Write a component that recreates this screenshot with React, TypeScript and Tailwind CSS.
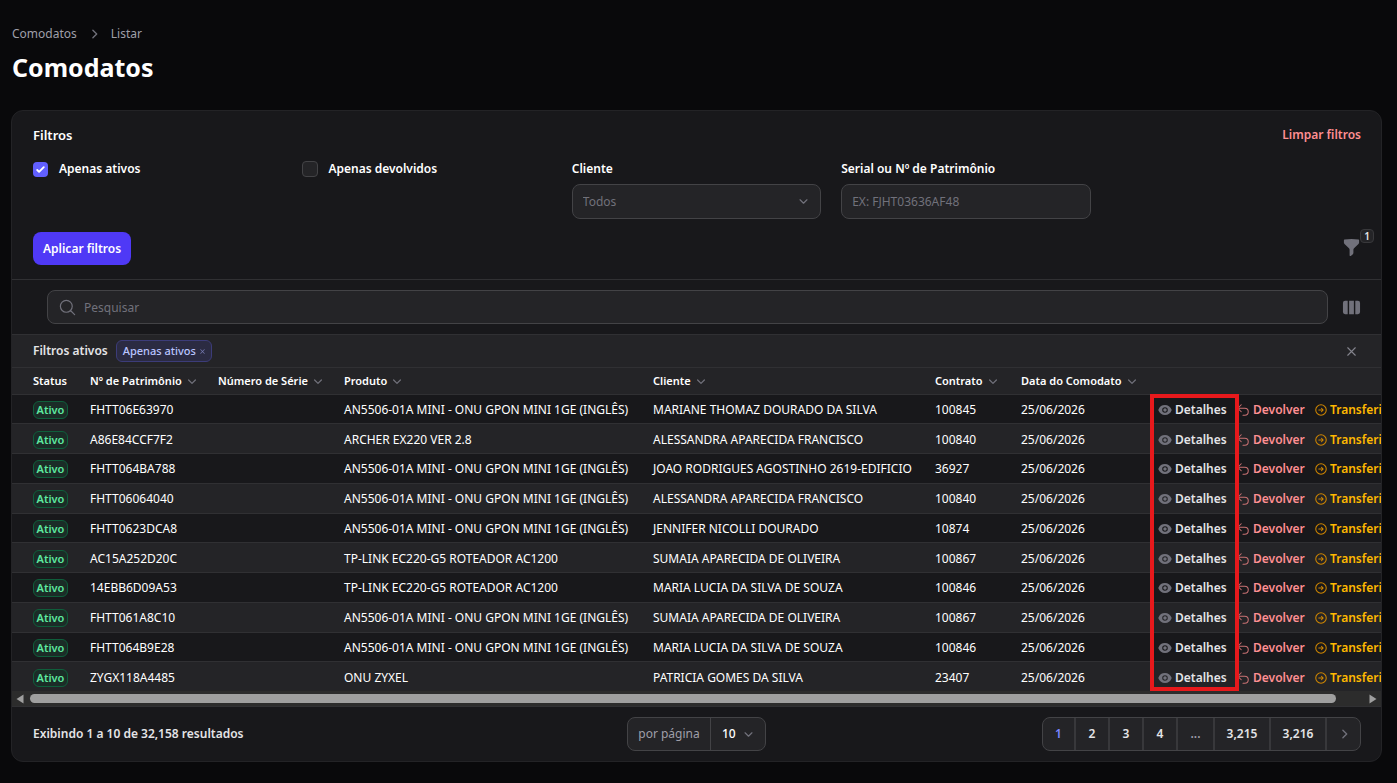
import {
  HiMiniChevronDown,
  HiMiniChevronRight,
  HiMiniEye,
  HiMiniFunnel,
  HiMiniViewColumns,
  HiMiniXMark,
  HiOutlineArrowRightCircle,
  HiOutlineArrowUturnLeft,
  HiOutlineChevronDown,
  HiOutlineMagnifyingGlass,
  HiOutlineXMark,
} from "react-icons/hi2";

type Loan = {
  asset: string;
  product: string;
  client: string;
  contract: string;
};

const ONU = "AN5506-01A MINI - ONU GPON MINI 1GE (INGLÊS)";
const ROUTER = "TP-LINK EC220-G5 ROTEADOR AC1200";

const loans: Loan[] = [
  { asset: "FHTT06E63970", product: ONU, client: "MARIANE THOMAZ DOURADO DA SILVA", contract: "100845" },
  { asset: "A86E84CCF7F2", product: "ARCHER EX220 VER 2.8", client: "ALESSANDRA APARECIDA FRANCISCO", contract: "100840" },
  { asset: "FHTT064BA788", product: ONU, client: "JOAO RODRIGUES AGOSTINHO 2619-EDIFICIO", contract: "36927" },
  { asset: "FHTT06064040", product: ONU, client: "ALESSANDRA APARECIDA FRANCISCO", contract: "100840" },
  { asset: "FHTT0623DCA8", product: ONU, client: "JENNIFER NICOLLI DOURADO", contract: "10874" },
  { asset: "AC15A252D20C", product: ROUTER, client: "SUMAIA APARECIDA DE OLIVEIRA", contract: "100867" },
  { asset: "14EBB6D09A53", product: ROUTER, client: "MARIA LUCIA DA SILVA DE SOUZA", contract: "100846" },
  { asset: "FHTT061A8C10", product: ONU, client: "SUMAIA APARECIDA DE OLIVEIRA", contract: "100867" },
  { asset: "FHTT064B9E28", product: ONU, client: "MARIA LUCIA DA SILVA DE SOUZA", contract: "100846" },
  { asset: "ZYGX118A4485", product: "ONU ZYXEL", client: "PATRICIA GOMES DA SILVA", contract: "23407" },
];

const sortable = ["Nº de Patrimônio", "Número de Série", "Produto", "Cliente", "Contrato", "Data do Comodato"];

const pages = [
  { label: "1", width: "w-[33px]", tone: "text-[#7c86ff]" },
  { label: "2", width: "w-[34px]", tone: "text-zinc-200" },
  { label: "3", width: "w-[34px]", tone: "text-zinc-200" },
  { label: "4", width: "w-[34px]", tone: "text-zinc-200" },
  { label: "...", width: "w-[37px]", tone: "text-zinc-400" },
  { label: "3,215", width: "w-[56px]", tone: "text-zinc-200" },
  { label: "3,216", width: "w-[56px]", tone: "text-zinc-200" },
];

function Filters() {
  return (
    <section className="pt-[14px] pr-5 pb-[14px] pl-[21px]">
      <div className="flex h-5 items-center justify-between">
        <h2 className="text-[13px] font-semibold text-white">Filtros</h2>
        <button className="font-semibold text-[#ff8f92]">Limpar filtros</button>
      </div>
      <div className="mt-[14px] grid grid-cols-5 gap-5 pr-px">
        <label className="flex h-5 items-center gap-[11px] font-semibold text-white">
          <span className="relative flex size-[15px]">
            <input type="checkbox" defaultChecked className="peer size-full appearance-none rounded bg-[#615fff]" />
            <svg viewBox="0 0 16 16" className="pointer-events-none absolute inset-0 size-full" fill="white" aria-hidden="true">
              <path d="M12.207 4.793a1 1 0 010 1.414l-5 5a1 1 0 01-1.414 0l-2-2a1 1 0 011.414-1.414L6.5 9.086l4.293-4.293a1 1 0 011.414 0z" />
            </svg>
          </span>
          Apenas ativos
        </label>
        <label className="flex h-5 items-center gap-[10px] font-semibold text-white">
          <input type="checkbox" className="size-4 appearance-none rounded border border-[#434346] bg-[#242427]" />
          Apenas devolvidos
        </label>
        <div>
          <label htmlFor="client" className="flex h-5 items-center font-semibold text-white">Cliente</label>
          <div className="relative mt-[5px]">
            <select id="client" defaultValue="" className="h-[35px] w-full appearance-none rounded-lg border border-[#434346] bg-[#242427] px-[10px] text-[#71717b]">
              <option value="">Todos</option>
            </select>
            <HiOutlineChevronDown className="pointer-events-none absolute top-[12px] right-[12px] size-[11px] text-[#71717b]" strokeWidth={2.6} />
          </div>
        </div>
        <div>
          <label htmlFor="serial" className="flex h-5 items-center font-semibold text-white">Serial ou Nº de Patrimônio</label>
          <input id="serial" placeholder="EX: FJHT03636AF48" className="mt-[5px] h-[35px] w-full rounded-lg border border-[#434346] bg-[#242427] px-[10px] placeholder:text-[#71717b]" />
        </div>
      </div>
      <div className="mt-[13px] flex items-start justify-between">
        <button className="h-[33px] rounded-lg bg-[#4f39f6] px-[10px] font-semibold text-white">Aplicar filtros</button>
        <button aria-label="Filtros" className="relative mt-[6px] flex w-[19px] justify-center text-[#71717b]">
          <HiMiniFunnel className="size-[19px]" />
          <span className="absolute -top-[9px] left-[18px] flex h-[14px] w-[14px] items-center justify-center rounded border border-[#38383b] bg-[#242427] text-[10px] font-semibold text-zinc-200">1</span>
        </button>
      </div>
    </section>
  );
}

function LoanTable() {
  return (
    <div className="overflow-x-auto [scrollbar-width:none]">
      <div className="relative min-w-[1403px]">
        <table className="h-[323px] w-full table-fixed border-collapse text-left whitespace-nowrap">
          <colgroup>
            <col className="w-[67px]" />
            <col className="w-[128px]" />
            <col className="w-[126px]" />
            <col className="w-[309px]" />
            <col className="w-[282px]" />
            <col className="w-[86px]" />
            <col className="w-[138px]" />
            <col />
          </colgroup>
          <thead className="bg-[#242427]">
            <tr className="h-[26px] text-[11px] text-white">
              <th className="p-0 pl-[21px] font-semibold">Status</th>
              {sortable.map((name) => (
                <th key={name} className="p-0 pl-[11px] font-semibold">
                  <button className="flex items-center gap-[2px]">
                    {name}
                    <HiMiniChevronDown className="size-4 text-[#71717b]" />
                  </button>
                </th>
              ))}
              <th aria-label="Ações" className="p-0" />
            </tr>
          </thead>
          <tbody className="text-white">
            {loans.map((loan) => (
              <tr key={loan.asset} className="border-t border-[#303033] even:bg-[#242427]">
                <td className="p-0 pt-[2px] pl-[21px]">
                  <span className="flex h-[18px] w-[35px] items-center justify-center rounded-md border border-[#0f5e3b] bg-[#1b2c27] text-[11px] font-semibold text-[#5ee9a0]">Ativo</span>
                </td>
                <td className="p-0 pt-[2px] pl-[11px]">{loan.asset}</td>
                <td className="p-0" />
                <td className="p-0 pt-[2px] pl-[11px]">{loan.product}</td>
                <td className="p-0 pt-[2px] pl-[11px]">{loan.client}</td>
                <td className="p-0 pt-[2px] pl-[11px]">{loan.contract}</td>
                <td className="p-0 pt-[2px] pl-[11px]">25/06/2026</td>
                <td className="p-0 pt-[2px] pl-[10px]">
                  <div className="flex items-center font-semibold">
                    <button className="flex w-[78px] items-center gap-[3px] text-zinc-200">
                      <HiMiniEye className="size-[14px] text-[#71717b]" />
                      Detalhes
                    </button>
                    <button className="flex w-[78px] items-center gap-[3px] text-[#ff8f92]">
                      <HiOutlineArrowUturnLeft className="size-[14px] text-[#c97173]" strokeWidth={1.8} />
                      Devolver
                    </button>
                    <button className="flex items-center gap-[2px] text-[#ffb900]">
                      <HiOutlineArrowRightCircle className="size-[14px] text-[#d08700]" strokeWidth={1.8} />
                      Transferir
                    </button>
                  </div>
                </td>
              </tr>
            ))}
          </tbody>
        </table>
        <div className="pointer-events-none absolute top-[26px] bottom-0 left-[1138px] w-[89px] border-4 border-[#e7191c]" />
      </div>
    </div>
  );
}

function ScrollTrack() {
  return (
    <div className="flex h-[15px] items-center bg-[#2c2c2c] px-1">
      <svg viewBox="0 0 8 10" className="h-[10px] w-2" fill="#9f9f9f" aria-hidden="true"><path d="M7.500 0.500V9.500L0.500 5Z" /></svg>
      <div className="mx-[6px] flex-1">
        <div className="h-[9px] w-[98%] rounded-full bg-[#9f9f9f]" />
      </div>
      <svg viewBox="0 0 8 10" className="h-[10px] w-2" fill="#9f9f9f" aria-hidden="true"><path d="M0.500 0.500V9.500L7.500 5Z" /></svg>
    </div>
  );
}

function Footer() {
  return (
    <footer className="grid grid-cols-[1fr_auto_1fr] items-center border-t border-[#303033] px-5 py-[10px]">
      <p className="pl-px font-semibold text-zinc-200">Exibindo 1 a 10 de 32,158 resultados</p>
      <div className="flex h-[34px] rounded-lg border border-[#434346] bg-[#242427]">
        <label htmlFor="per-page" className="flex w-[83px] items-center justify-center border-r border-[#434346] text-zinc-400">por página</label>
        <div className="relative">
          <select id="per-page" className="h-full w-[54px] appearance-none bg-transparent pl-[11px] font-medium text-white">
            <option>10</option>
          </select>
          <HiOutlineChevronDown className="pointer-events-none absolute top-[11px] right-[11px] size-[11px] text-[#71717b]" strokeWidth={2.6} />
        </div>
      </div>
      <nav aria-label="Paginação" className="flex h-[34px] divide-x-2 divide-[#38383b] justify-self-end overflow-hidden rounded-lg border border-[#434346] bg-[#242427]">
        {pages.map((page) => (
          <button key={page.label} className={`${page.width} ${page.tone} font-semibold`}>{page.label}</button>
        ))}
        <button aria-label="Próxima" className="flex w-[33px] items-center justify-center text-[#71717b]">
          <HiMiniChevronRight className="size-[18px]" />
        </button>
      </nav>
    </footer>
  );
}

export default function App() {
  return (
    <div className="min-h-screen bg-[#09090b] pt-6 pr-[15px] pb-5 pl-[11px] font-['Noto_Sans',sans-serif] text-[12px] leading-5 text-white">
      <nav aria-label="Navegação" className="flex h-5 items-center gap-2 pl-px text-[#9f9fa9]">
        <a href="#comodatos">Comodatos</a>
        <HiMiniChevronRight className="size-[18px] text-[#71717b]" />
        <a href="#listar">Listar</a>
      </nav>
      <h1 className="mt-[7px] pl-px text-[25px] leading-8 font-bold">Comodatos</h1>
      <main className="mt-[27px] overflow-hidden rounded-xl border border-[#232326] bg-[#18181b]">
        <Filters />
        <div className="flex items-center border-t border-[#303033] py-[10px] pr-5 pl-[35px]">
          <div className="relative flex-1">
            <HiOutlineMagnifyingGlass className="pointer-events-none absolute top-[8px] left-[11px] size-[19px] text-[#71717b]" />
            <input type="search" aria-label="Pesquisar" placeholder="Pesquisar" className="block h-[34px] w-full rounded-lg border border-[#434346] bg-[#242427] pl-[36px] placeholder:text-[#71717b]" />
          </div>
          <button aria-label="Colunas" className="ml-[14px] text-[#71717b]">
            <HiMiniViewColumns className="size-[19px]" />
          </button>
        </div>
        <div className="flex h-[34px] items-center border-y border-[#303033] bg-[#242427] pr-[22px] pl-[21px]">
          <span className="font-semibold text-zinc-200">Filtros ativos</span>
          <span className="ml-2 flex h-[22px] items-center gap-[2px] rounded-md border border-[#3c3c79] bg-[#2b2b42] px-1 pl-[6px] text-[11px] font-medium text-[#b9c4ff]">
            Apenas ativos
            <button aria-label="Remover filtro" className="text-[#7377ae]"><HiMiniXMark className="size-[9px]" /></button>
          </span>
          <button aria-label="Remover todos os filtros" className="ml-auto text-[#84848d]"><HiOutlineXMark className="size-[15px]" strokeWidth={1.8} /></button>
        </div>
        <LoanTable />
        <ScrollTrack />
        <Footer />
      </main>
    </div>
  );
}
